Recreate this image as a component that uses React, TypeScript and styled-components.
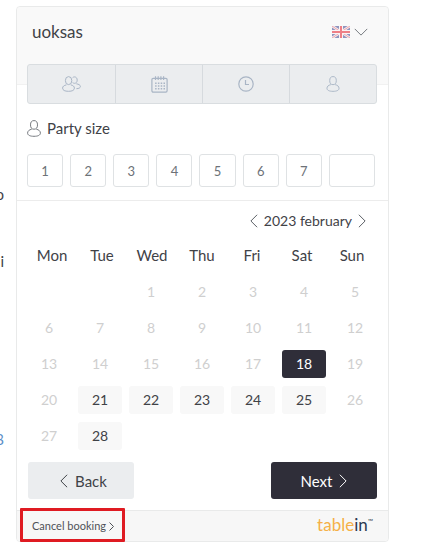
import React from "react";
import styled, { createGlobalStyle, css } from "styled-components";

const GlobalStyle = createGlobalStyle`
  * { box-sizing: border-box; }
  body {
    margin: 0;
    background: #fff;
    color: #3f4247;
    font-family: Lato, "Liberation Sans", sans-serif;
    font-size: 15px;
    line-height: 20px;
  }
  button, input { font: inherit; color: inherit; margin: 0; padding: 0; }
  button { cursor: pointer; }
`;

const Page = styled.div`
  display: flex;
  align-items: flex-start;
  padding: 6px 40px 14px 0;
`;

const ClippedText = styled.aside`
  display: flex;
  flex-direction: column;
  align-items: flex-end;
  width: 4px;
  margin-right: 12px;
  padding-top: 178px;
  overflow: hidden;
`;

const ClippedLine = styled.span<{ $after?: number; $link?: boolean }>`
  margin-bottom: ${(p) => p.$after ?? 0}px;
  color: ${(p) => (p.$link ? "#5c8fc7" : "#3f4247")};
`;

const Card = styled.main`
  flex: 1;
  min-width: 0;
  border: 1px solid #e9eaea;
  border-radius: 4px;
  background: #fff;
`;

const Header = styled.header`
  display: flex;
  justify-content: space-between;
  align-items: flex-start;
  height: 78px;
  padding: 13px 20px 0 15px;
  border-bottom: 1px solid #f1f1f1;
  border-radius: 4px 4px 0 0;
  background: #f9f9f9;
`;

const Title = styled.h1`
  margin: 0;
  font-size: 17px;
  font-weight: 400;
  line-height: 24px;
`;

const LanguageButton = styled.button`
  display: flex;
  align-items: center;
  gap: 4px;
  height: 24px;
  border: 0;
  background: none;
  color: #777b80;
`;

const Steps = styled.nav`
  display: grid;
  grid-template-columns: repeat(4, 1fr);
  height: 40px;
  margin: -21px 11px 0 10px;
  border: 1px solid #d9dde0;
  border-radius: 3px;
  background: #ebedef;
  overflow: hidden;
`;

const Step = styled.button`
  display: flex;
  align-items: center;
  justify-content: center;
  border: 0;
  background: none;
  color: #a9b5c5;
  & + & { border-left: 1px solid #d6dade; }
`;

const PartySection = styled.section`
  padding: 14px 13px 13px 10px;
  border-bottom: 1px solid #ececec;
`;

const SectionTitle = styled.h2`
  display: flex;
  align-items: center;
  gap: 6px;
  margin: 0 0 16px;
  font-size: 15px;
  font-weight: 400;
  line-height: 20px;
  svg { color: #777b80; }
`;

const PartyOptions = styled.div`
  display: grid;
  grid-template-columns: repeat(7, 36fr) 46fr;
  gap: 7px;
`;

const optionBox = css`
  width: 100%;
  min-width: 0;
  height: 33px;
  border: 1px solid #dfe2e4;
  border-radius: 3px;
  background: #fff;
  color: #6d7278;
  font-size: 13px;
  text-align: center;
`;
const PartyOption = styled.button`${optionBox}`;
const PartyInput = styled.input`${optionBox}`;

const CalendarSection = styled.section`
  padding: 10px 11px 12px 10px;
`;

const MonthBar = styled.div`
  display: flex;
  justify-content: flex-end;
  align-items: center;
  gap: 6px;
  margin-bottom: 13px;
  padding-right: 11px;
  font-size: 14px;
`;

const ArrowButton = styled.button`
  display: flex;
  border: 0;
  background: none;
  color: #5c6066;
`;

const Calendar = styled.table`
  display: block;
`;

const WeekHead = styled.thead`
  display: block;
  margin-bottom: 12px;
  tr { display: grid; grid-template-columns: repeat(7, 1fr); }
`;

const Weekday = styled.th`
  padding: 0;
  font-weight: 400;
  line-height: 22px;
  text-align: center;
`;

const Weeks = styled.tbody`
  display: grid;
  gap: 8px;
`;

const Week = styled.tr`
  display: grid;
  grid-template-columns: repeat(7, 1fr);
  gap: 7px;
`;

const DayCell = styled.td`
  display: flex;
  height: 28px;
  padding: 0;
`;

type DayState = "past" | "open" | "selected";

const dayLook = {
  past: css`background: none; color: #cfcfcf; cursor: default;`,
  open: css`background: #f8f8f8; color: #3f4247;`,
  selected: css`background: #2f2e39; color: #fff;`,
};

const Day = styled.button<{ $state: DayState }>`
  flex: 1;
  min-width: 0;
  border: 0;
  border-radius: 3px;
  font-size: 14px;
  ${(p) => dayLook[p.$state]}
`;

const Actions = styled.div`
  display: flex;
  justify-content: space-between;
  padding: 0 11px 11px;
`;

const ActionButton = styled.button<{ $primary?: boolean }>`
  display: flex;
  align-items: center;
  justify-content: center;
  gap: 7px;
  width: 106px;
  height: 37px;
  padding-left: ${(p) => (p.$primary ? 0 : 5)}px;
  border: 0;
  border-radius: 3px;
  background: ${(p) => (p.$primary ? "#2f2e39" : "#ebedef")};
  color: ${(p) => (p.$primary ? "#fff" : "#3f4247")};
`;

const Footer = styled.footer`
  position: relative;
  display: flex;
  justify-content: space-between;
  align-items: center;
  height: 31px;
  padding: 0 15px;
  border-top: 1px solid #e9eaea;
  border-radius: 0 0 4px 4px;
  background: #f7f7f7;
`;

const CancelLink = styled.a`
  display: flex;
  align-items: center;
  gap: 3px;
  color: #4f5257;
  font-size: 11px;
  text-decoration: none;
`;

const Highlight = styled.span`
  position: absolute;
  left: 3px;
  top: -3px;
  width: 105px;
  height: 34px;
  border: 3px solid #df1b22;
  border-radius: 1px;
  pointer-events: none;
`;

const Brand = styled.a`
  display: flex;
  align-items: flex-start;
  margin-bottom: 3px;
  color: #f5b047;
  font-size: 17px;
  line-height: 22px;
  text-decoration: none;
`;
const BrandDark = styled.span`color: #2b3950;`;
const TradeMark = styled.span`
  color: #2b3950;
  font-size: 7px;
  line-height: 14px;
`;

function Chevron({ to, width, height }: { to: "left" | "right" | "down"; width: number; height: number }) {
  const points = { left: "9,1 1,9 9,17", right: "1,1 9,9 1,17", down: "1,1 9,9 17,1" }[to];
  return (
    <svg width={width} height={height} viewBox={to === "down" ? "0 0 18 10" : "0 0 10 18"} fill="none" stroke="currentColor" strokeWidth="1" aria-hidden>
      <polyline points={points} vectorEffect="non-scaling-stroke" />
    </svg>
  );
}

function PersonIcon({ width, height }: { width: number; height: number }) {
  return (
    <svg width={width} height={height} viewBox="0 0 14 17" fill="none" stroke="currentColor" strokeWidth="1" aria-hidden>
      <ellipse cx="7" cy="4.900" rx="3.500" ry="4.300" />
      <path d="M4.700 9.200C2.200 9.700.6 11.100.6 13C.6 15.200 3 16.300 7 16.300S13.400 15.200 13.400 13C13.400 11.100 11.800 9.700 9.300 9.200" />
    </svg>
  );
}

function PeopleIcon() {
  return (
    <svg width="19" height="16" viewBox="0 0 19 16" fill="none" stroke="currentColor" strokeWidth="1" aria-hidden>
      <ellipse cx="6.600" cy="4.600" rx="3.200" ry="4" />
      <path d="M4.400 8.900C2.100 9.300.6 10.400.6 12.100C.6 14.300 2.800 15.300 6.500 15.300S12.400 14.300 12.400 12.100C12.400 10.400 11 9.300 8.800 8.900" />
      <path d="M10.600 1.700C11.100 1.200 11.700.9 12.500.9C14.100.9 15.200 2.200 15.200 4.100S14.100 7.300 12.500 7.300C11.700 7.300 11.100 7 10.600 6.500" />
      <path d="M14.300 7.800C16.700 8.200 18.400 9 18.400 10.500C18.400 11.800 16.900 12.600 14.400 12.700" />
    </svg>
  );
}

function CalendarIcon() {
  return (
    <svg width="17" height="17" viewBox="0 0 17 17" fill="none" stroke="currentColor" strokeWidth="1.200" aria-hidden>
      <rect x=".9" y="2.300" width="15.200" height="13.800" rx="1.300" />
      <path d="M4.500.300v3.700M7.200.300v3.700M9.900.300v3.700M12.600.300v3.700" />
      <path d="M4.100 7.200h9.900M4.100 10h9.900M4.100 12.800h9.900" strokeWidth="1.500" strokeDasharray="1.500 1.300" />
    </svg>
  );
}

function ClockIcon() {
  return (
    <svg width="16" height="16" viewBox="0 0 16 16" fill="none" stroke="currentColor" strokeWidth="1.200" aria-hidden>
      <circle cx="8" cy="8" r="7.200" />
      <path d="M7.500 4v4.500h3.500" />
    </svg>
  );
}

function UnionFlag() {
  return (
    <svg width="18" height="12" viewBox="0 0 18 12" aria-hidden>
      <rect width="18" height="12" fill="#8f94bd" />
      <path d="M0 0l18 12M18 0L0 12" stroke="#f6eef2" strokeWidth="2.600" />
      <path d="M0 0l18 12M18 0L0 12" stroke="#ed9ca2" strokeWidth=".9" />
      <path d="M9 0v12M0 6h18" stroke="#faf3f4" strokeWidth="4" />
      <path d="M9 0v12M0 6h18" stroke="#ee7f86" strokeWidth="2" />
    </svg>
  );
}

const weekdays = ["Mon", "Tue", "Wed", "Thu", "Fri", "Sat", "Sun"];
const leadingBlanks = 2;
const closedDays = [19, 26, 27];
const weeks = Array.from({ length: 5 }, (_, w) =>
  Array.from({ length: 7 }, (_, d) => w * 7 + d + 1 - leadingBlanks).map((n) => (n >= 1 && n <= 28 ? n : null))
);
const stateOf = (n: number): DayState =>
  n === 18 ? "selected" : n > 20 && !closedDays.includes(n) ? "open" : "past";

export default function App() {
  return (
    <>
      <GlobalStyle />
      <Page>
        <ClippedText>
          <ClippedLine $after={47}>o</ClippedLine>
          <ClippedLine $after={158}>i</ClippedLine>
          <ClippedLine $link>8</ClippedLine>
        </ClippedText>
        <Card>
          <Header>
            <Title>uoksas</Title>
            <LanguageButton aria-label="Language">
              <UnionFlag />
              <Chevron to="down" width={14} height={8} />
            </LanguageButton>
          </Header>
          <Steps>
            <Step aria-label="Guests"><PeopleIcon /></Step>
            <Step aria-label="Date"><CalendarIcon /></Step>
            <Step aria-label="Time"><ClockIcon /></Step>
            <Step aria-label="Contact"><PersonIcon width={14} height={16} /></Step>
          </Steps>
          <PartySection>
            <SectionTitle>
              <PersonIcon width={14} height={17} />
              <label htmlFor="party">Party size</label>
            </SectionTitle>
            <PartyOptions>
              {[1, 2, 3, 4, 5, 6, 7].map((n) => (
                <PartyOption key={n}>{n}</PartyOption>
              ))}
              <PartyInput id="party" type="text" inputMode="numeric" />
            </PartyOptions>
          </PartySection>
          <CalendarSection>
            <MonthBar>
              <ArrowButton aria-label="Previous month"><Chevron to="left" width={8} height={14} /></ArrowButton>
              <span>2023 february</span>
              <ArrowButton aria-label="Next month"><Chevron to="right" width={8} height={14} /></ArrowButton>
            </MonthBar>
            <Calendar>
              <WeekHead>
                <tr>{weekdays.map((d) => <Weekday key={d} scope="col">{d}</Weekday>)}</tr>
              </WeekHead>
              <Weeks>
                {weeks.map((week, i) => (
                  <Week key={i}>
                    {week.map((n, j) => (
                      <DayCell key={j}>
                        {n !== null && (
                          <Day $state={stateOf(n)} disabled={stateOf(n) === "past"}>{n}</Day>
                        )}
                      </DayCell>
                    ))}
                  </Week>
                ))}
              </Weeks>
            </Calendar>
          </CalendarSection>
          <Actions>
            <ActionButton><Chevron to="left" width={8} height={14} />Back</ActionButton>
            <ActionButton $primary>Next<Chevron to="right" width={8} height={14} /></ActionButton>
          </Actions>
          <Footer>
            <CancelLink href="#cancel">Cancel booking<Chevron to="right" width={5} height={9} /></CancelLink>
            <Highlight />
            <Brand href="#tablein">table<BrandDark>in</BrandDark><TradeMark>™</TradeMark></Brand>
          </Footer>
        </Card>
      </Page>
    </>
  );
}
